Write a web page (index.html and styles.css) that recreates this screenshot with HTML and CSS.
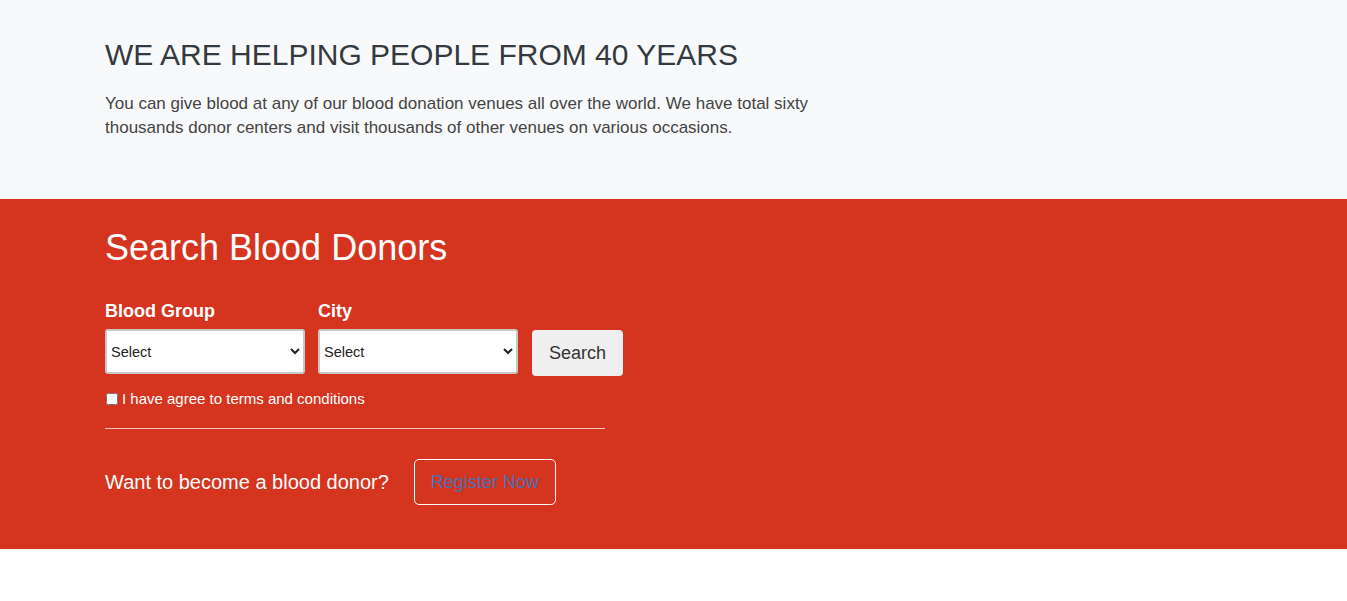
FILE: index.html
```html
<!DOCTYPE html>
<html>
<head>
<meta charset="utf-8">
<link rel="stylesheet" href="styles.css">
</head>
<body>
<section class="intro">
  <div class="container">
    <h1 class="intro-title">WE ARE HELPING PEOPLE FROM 40 YEARS</h1>
    <p class="intro-text">You can give blood at any of our blood donation venues all over the world. We have total sixty thousands donor centers and visit thousands of other venues on various occasions.</p>
  </div>
</section>
<section class="search">
  <div class="container">
    <h2 class="search-title">Search Blood Donors</h2>
    <form class="search-form">
      <div class="fields">
        <div class="field">
          <label class="field-label">Blood Group</label>
          <select class="field-select"><option>Select</option></select>
        </div>
        <div class="field">
          <label class="field-label">City</label>
          <select class="field-select"><option>Select</option></select>
        </div>
        <button type="button" class="search-btn">Search</button>
      </div>
      <label class="terms"><input type="checkbox" class="terms-check"> I have agree to terms and conditions</label>
    </form>
    <hr class="divider">
    <div class="register">
      <span class="register-text">Want to become a blood donor?</span>
      <a class="register-btn">Register Now</a>
    </div>
  </div>
</section>
</body>
</html>
```
FILE: styles.css
```css
* { box-sizing: border-box; }
body {
  margin: 0;
  font-family: "Liberation Sans", Arial, sans-serif;
  background: #fff;
  height: 601px;
}
.container {
  padding-left: 105px;
}
.intro {
  background: #f8f9fa;
  height: 199px;
  padding-top: 37px;
}
.intro-title {
  margin: 0;
  font-weight: 400;
  font-size: 30px;
  line-height: 36px;
  color: #343a40;
}
.intro-text {
  margin: 19px 0 0;
  width: 760px;
  font-size: 17px;
  line-height: 24px;
  color: #444;
}
.search {
  background: #d5351f;
  height: 350px;
  padding-top: 28px;
  color: #fff;
}
.search-title {
  margin: 0;
  font-weight: 400;
  font-size: 36px;
  line-height: 42px;
}
.search-form {
  margin-top: 31px;
}
.fields {
  display: flex;
  align-items: flex-end;
  gap: 13px;
}
.field {
  display: flex;
  flex-direction: column;
}
.field-label {
  font-weight: 700;
  font-size: 18px;
  line-height: 22px;
  margin-bottom: 7px;
}
.field-select {
  width: 200px;
  height: 45px;
  font-family: "Liberation Sans", Arial, sans-serif;
  font-size: 14.5px;
  color: #222;
  background: #fff;
  border: 2px solid #c8c8c8;
  border-radius: 3px;
  padding: 0;
}
.search-btn {
  margin-left: 1px;
  width: 91px;
  height: 46px;
  margin-bottom: -2px;
  background: #efefef;
  border: none;
  border-radius: 4px;
  font-family: "Liberation Sans", Arial, sans-serif;
  font-size: 18px;
  color: #333;
}
.terms {
  display: flex;
  align-items: center;
  margin-top: 16px;
  font-size: 15px;
  line-height: 18px;
}
.terms-check {
  margin: 0 4px 0 1px;
  width: 12px;
  height: 12px;
}
.divider {
  margin: 20px 0 0;
  width: 500px;
  border: 0;
  border-top: 1px solid #f0c6c0;
}
.register {
  display: flex;
  align-items: center;
  gap: 25px;
  margin-top: 30px;
}
.register-text {
  font-size: 20px;
  line-height: 24px;
}
.register-btn {
  display: flex;
  align-items: center;
  justify-content: center;
  width: 142px;
  height: 46px;
  border: 1px solid #fff;
  border-radius: 5px;
  font-size: 18px;
  color: #4a6fb0;
}
```
